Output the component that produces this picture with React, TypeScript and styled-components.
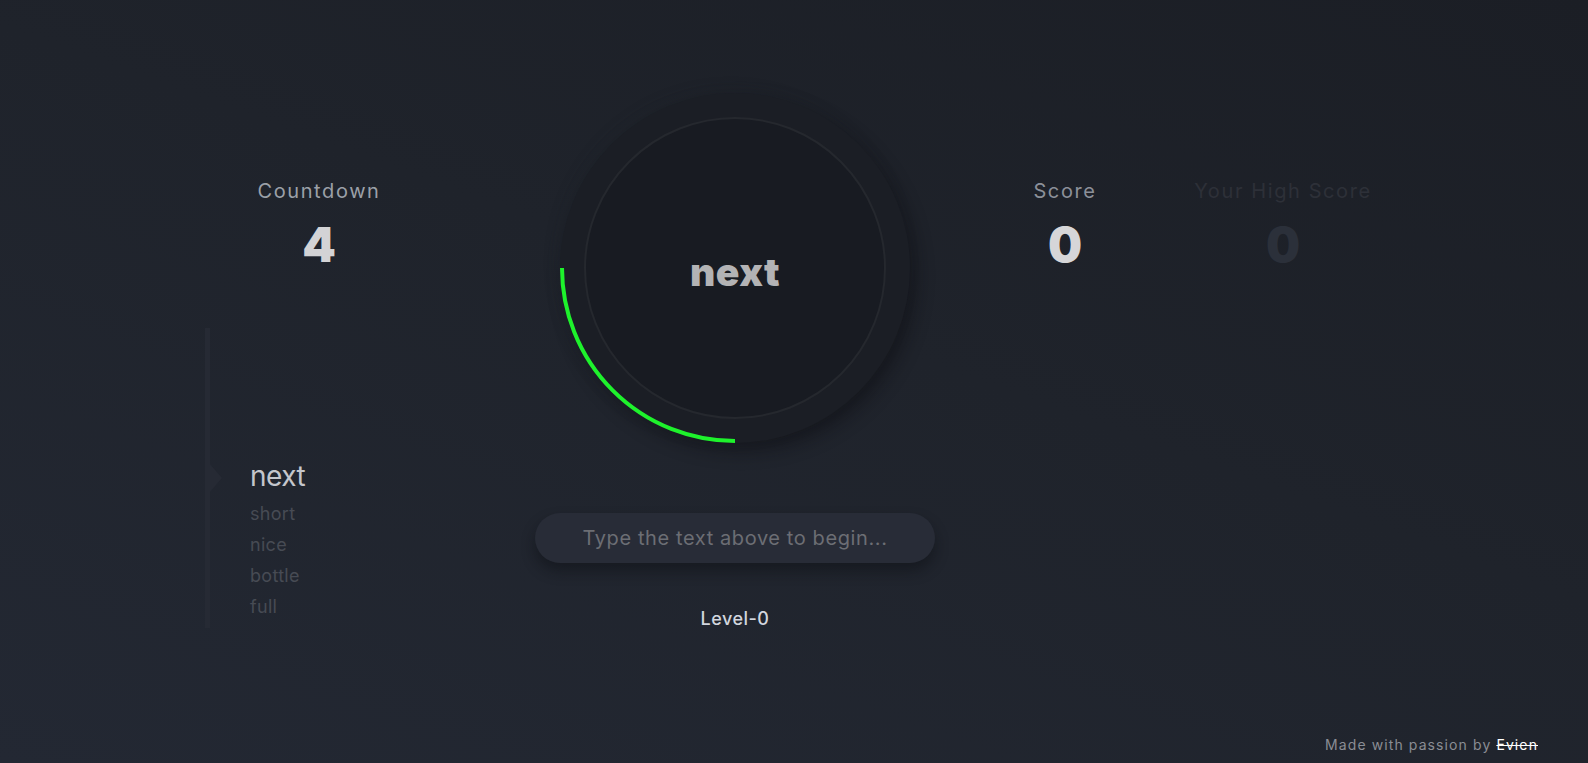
import React from "react";
import styled, { createGlobalStyle } from "styled-components";

const Global = createGlobalStyle`
  html, body { margin: 0; padding: 0; }
  body {
    font-family: "Inter", "Noto Sans", sans-serif;
    background: #1e222a;
  }
  * { box-sizing: border-box; }
`;

const Page = styled.div`
  position: relative;
  width: 100%;
  height: 763px;
  overflow: hidden;
  background: linear-gradient(200deg, #1b1e25 0%, #1f232b 45%, #232833 100%);
`;

const Main = styled.main`
  display: flex;
  align-items: flex-start;
  padding-top: 93px;
`;

const LeftCol = styled.section`
  width: 228px;
  margin-left: 205px;
  display: flex;
  flex-direction: column;
`;

const CenterCol = styled.section`
  width: 400px;
  margin-left: 102px;
  display: flex;
  flex-direction: column;
  align-items: center;
`;

const RightCol = styled.section`
  margin-left: 30px;
  display: flex;
  gap: 18px;
  padding-top: 85px;
`;

const Stat = styled.div<{ $w?: number }>`
  width: ${(p) => p.$w ?? 228}px;
  display: flex;
  flex-direction: column;
  align-items: center;
`;

const StatLabel = styled.div<{ $color: string }>`
  font-size: 20px;
  letter-spacing: 1.6px;
  font-weight: 400;
  color: ${(p) => p.$color};
  line-height: 26px;
`;

const StatValue = styled.div<{ $color: string }>`
  font-size: 48px;
  font-weight: 900;
  line-height: 56px;
  margin-top: 13px;
  color: ${(p) => p.$color};
`;

const LeftStats = styled.div`
  padding-top: 85px;
`;

const WordList = styled.div`
  position: relative;
  margin-top: 55px;
  height: 300px;
  border-left: 5px solid #262a34;
  padding-left: 40px;
  display: flex;
  flex-direction: column;
  justify-content: flex-end;
  padding-bottom: 6px;
`;

const Pointer = styled.div`
  position: absolute;
  left: 0;
  top: 136px;
  width: 0;
  height: 0;
  border-top: 14px solid transparent;
  border-bottom: 14px solid transparent;
  border-left: 12px solid #262a34;
`;

const Word = styled.div<{ $active?: boolean }>`
  font-size: ${(p) => (p.$active ? 28 : 18)}px;
  line-height: ${(p) => (p.$active ? 38 : 31)}px;
  margin-bottom: ${(p) => (p.$active ? 3 : 0)}px;
  color: ${(p) => (p.$active ? "#c4c6cc" : "#474b54")};
  font-weight: 400;
  letter-spacing: ${(p) => (p.$active ? "-0.5px" : "0.3px")};
`;

const Dial = styled.div`
  position: relative;
  width: 350px;
  height: 350px;
  border-radius: 50%;
  background: #1b1e25;
  box-shadow: 6px 8px 18px rgba(10, 12, 16, 0.45), -4px -4px 14px rgba(40, 44, 54, 0.15);
  display: flex;
  align-items: center;
  justify-content: center;
`;

const Inner = styled.div`
  width: 302px;
  height: 302px;
  border-radius: 50%;
  background: #181b22;
  border: 2px solid #25282e;
  display: flex;
  align-items: center;
  justify-content: center;
`;

const CurrentWord = styled.div`
  font-size: 39px;
  font-weight: 900;
  color: #b3b3b5;
  letter-spacing: 0.5px;
  margin-top: 6px;
`;

const Arc = styled.svg`
  position: absolute;
  left: 0;
  top: 0;
  width: 350px;
  height: 350px;
  pointer-events: none;
`;

const Input = styled.input`
  margin-top: 70px;
  width: 400px;
  height: 50px;
  border-radius: 25px;
  border: none;
  outline: none;
  background: #282c37;
  box-shadow: 0 8px 14px rgba(12, 14, 18, 0.45);
  text-align: center;
  font-family: inherit;
  font-size: 20px;
  color: #d0d0d0;
  letter-spacing: 0.6px;
  &::placeholder { color: #6c6e74; }
`;

const Level = styled.div`
  margin-top: 45px;
  font-size: 18px;
  font-weight: 500;
  color: #d2d6de;
  letter-spacing: 0.5px;
`;

const Footer = styled.footer`
  position: absolute;
  right: 50px;
  bottom: 10px;
  font-size: 14px;
  letter-spacing: 1.1px;
  color: #8a8d94;
`;

const Author = styled.span`
  color: #ffffff;
  text-decoration: line-through;
`;

export default function App() {
  const words = ["short", "nice", "bottle", "full"];
  return (
    <Page>
      <Global />
      <Main>
        <LeftCol>
          <LeftStats>
            <Stat>
              <StatLabel $color="#9ba0a8">Countdown</StatLabel>
              <StatValue $color="#d3d3d5">4</StatValue>
            </Stat>
          </LeftStats>
          <WordList>
            <Pointer />
            <Word $active>next</Word>
            {words.map((w) => (
              <Word key={w}>{w}</Word>
            ))}
          </WordList>
        </LeftCol>
        <CenterCol>
          <Dial>
            <Inner>
              <CurrentWord>next</CurrentWord>
            </Inner>
            <Arc viewBox="0 0 350 350">
              <path d="M 2 175 A 173 173 0 0 0 175 348" fill="none" stroke="#1ef22c" strokeWidth="4" />
            </Arc>
          </Dial>
          <Input placeholder="Type the text above to begin..." readOnly />
          <Level>Level-0</Level>
        </CenterCol>
        <RightCol>
          <Stat $w={200}>
            <StatLabel $color="#8c9099">Score</StatLabel>
            <StatValue $color="#d6d6d8">0</StatValue>
          </Stat>
          <Stat $w={200}>
            <StatLabel $color="#2d3038">Your High Score</StatLabel>
            <StatValue $color="#2b303a">0</StatValue>
          </Stat>
        </RightCol>
      </Main>
      <Footer>
        Made with passion by <Author>Evien</Author>
      </Footer>
    </Page>
  );
}
